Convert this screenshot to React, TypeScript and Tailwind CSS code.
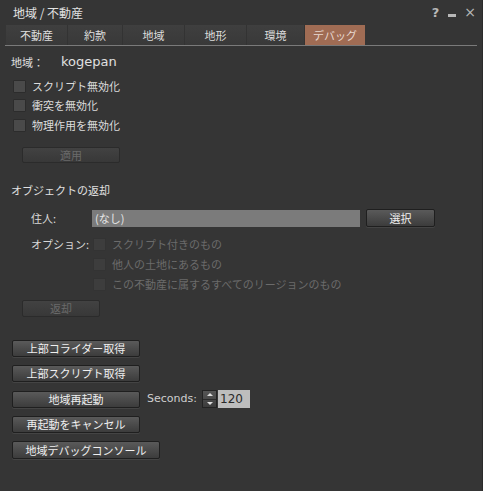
import React from 'react'

const jp = { fontFamily: '"Noto Sans CJK JP", "DejaVu Sans", sans-serif' }
const latin = { fontFamily: '"DejaVu Sans", "Noto Sans CJK JP", sans-serif' }

const tabs = [
  { label: '不動産', w: 'w-[62px]' },
  { label: '約款', w: 'w-[55px]' },
  { label: '地域', w: 'w-[62px]' },
  { label: '地形', w: 'w-[62px]' },
  { label: '環境', w: 'w-[58px]' },
  { label: 'デバッグ', w: 'w-[60px]', active: true },
]

function Check({ disabled, label }: { disabled?: boolean; label: string }) {
  return (
    <div className="flex items-center h-[13px]">
      <div
        className={
          'w-[13px] h-[13px] rounded-[1px] border ' +
          (disabled ? 'bg-[#3d3d3d] border-[#333]' : 'bg-[#4a4a4a] border-[#2c2c2c]')
        }
      />
      <span
        className={'ml-[6px] text-[11px] leading-none ' + (disabled ? 'text-[#6b6b6b]' : 'text-[#dcdcdc]')}
      >
        {label}
      </span>
    </div>
  )
}

function Btn({ label, className, disabled }: { label: string; className: string; disabled?: boolean }) {
  return (
    <div
      className={
        'flex items-center justify-center rounded-[2px] border text-[11px] leading-none ' +
        (disabled
          ? 'bg-gradient-to-b from-[#424242] to-[#383838] border-[#2b2b2b] text-[#6a6a6a] '
          : 'bg-gradient-to-b from-[#5a5a5a] to-[#3c3c3c] border-[#1f1f1f] text-[#f0f0f0] shadow-[0_1px_0_#444] ') +
        className
      }
    >
      {label}
    </div>
  )
}

export default function App() {
  return (
    <div className="w-[483px] h-[491px] bg-[#353535] overflow-hidden border-r border-[#2a2a2a]" style={jp}>
      {/* title bar */}
      <div className="h-[25px] flex items-center pl-[13px] pr-[6px] text-[12px] text-[#e2e2e2]">
        <span>地域 / 不動産</span>
        <div className="ml-auto flex items-center text-[#b8b8b8]">
          <span className="text-[13px] font-bold" style={latin}>?</span>
          <span className="ml-[9px] w-[8px] h-[3px] mt-[6px] bg-[#b8b8b8]" />
          <span className="ml-[8px] text-[14px]" style={latin}>×</span>
        </div>
      </div>

      {/* tabs */}
      <div className="flex h-[20px] ml-[6px]">
        {tabs.map((t) => (
          <div
            key={t.label}
            className={
              t.w +
              ' flex items-center justify-center text-[11px] ' +
              (t.active
                ? 'bg-[#a06c54] text-[#e8d8d0]'
                : 'bg-gradient-to-b from-[#3f3f3f] to-[#393939] border-r border-[#333] text-[#dedede]')
            }
          >
            {t.label}
          </div>
        ))}
      </div>
      <div className="h-px bg-[#7a7a7a] mx-[5px]" />

      {/* region */}
      <div className="mt-[8px] h-[16px] flex items-center pl-[11px] text-[#e0e0e0]">
        <span className="text-[11px] w-[50px]">地域：</span>
        <span className="text-[13px]" style={latin}>kogepan</span>
      </div>

      <div className="pl-[13px]">
        <div className="mt-[10px]">
          <Check label="スクリプト無効化" />
        </div>
        <div className="mt-[6px]">
          <Check label="衝突を無効化" />
        </div>
        <div className="mt-[7px]">
          <Check label="物理作用を無効化" />
        </div>
      </div>

      <div className="mt-[15px] pl-[22px]">
        <Btn label="適用" disabled className="w-[98px] h-[16px]" />
      </div>

      {/* return objects */}
      <div className="mt-[19px] h-[16px] flex items-center pl-[11px] text-[11px] text-[#e0e0e0]">
        オブジェクトの返却
      </div>

      <div className="mt-[11px] flex items-center h-[18px] pl-[31px]">
        <span className="w-[61px] text-[11px] text-[#d8d8d8]">住人:</span>
        <div className="w-[268px] h-[17px] bg-[#7b7b7b] flex items-center pl-[3px] text-[11px] text-[#e6e6e6]">
          (なし)
        </div>
        <Btn label="選択" className="ml-[6px] w-[69px] h-[18px]" />
      </div>

      <div className="mt-[11px] flex pl-[31px]">
        <span className="w-[62px] text-[11px] leading-[13px] text-[#d8d8d8]">オプション:</span>
        <div className="flex flex-col gap-[7px]">
          <Check disabled label="スクリプト付きのもの" />
          <Check disabled label="他人の土地にあるもの" />
          <Check disabled label="この不動産に属するすべてのリージョンのもの" />
        </div>
      </div>

      <div className="mt-[9px] pl-[22px]">
        <Btn label="返却" disabled className="w-[78px] h-[17px]" />
      </div>

      {/* debug buttons */}
      <div className="pl-[12px] flex flex-col gap-[8px] mt-[23px]">
        <Btn label="上部コライダー取得" className="w-[128px] h-[17px]" />
        <Btn label="上部スクリプト取得" className="w-[128px] h-[17px]" />
        <div className="flex items-center">
          <Btn label="地域再起動" className="w-[128px] h-[17px]" />
          <span className="ml-[7px] w-[55px] text-[11px] text-[#cfcfcf]" style={latin}>Seconds:</span>
          <div className="w-[15px] h-[18px] flex flex-col border border-[#222] bg-gradient-to-b from-[#555] to-[#3c3c3c]">
            <div className="flex-1 flex items-center justify-center border-b border-[#2a2a2a]">
              <div className="w-0 h-0 border-l-[3px] border-r-[3px] border-b-[3px] border-l-transparent border-r-transparent border-b-[#ddd]" />
            </div>
            <div className="flex-1 flex items-center justify-center">
              <div className="w-0 h-0 border-l-[3px] border-r-[3px] border-t-[3px] border-l-transparent border-r-transparent border-t-[#ddd]" />
            </div>
          </div>
          <div className="ml-px w-[32px] h-[18px] bg-[#bdbdbd] flex items-center pl-[2px] text-[12px] text-[#2a2a2a]" style={latin}>
            120
          </div>
        </div>
        <Btn label="再起動をキャンセル" className="w-[128px] h-[17px]" />
        <Btn label="地域デバッグコンソール" className="w-[148px] h-[18px]" />
      </div>
    </div>
  )
}
